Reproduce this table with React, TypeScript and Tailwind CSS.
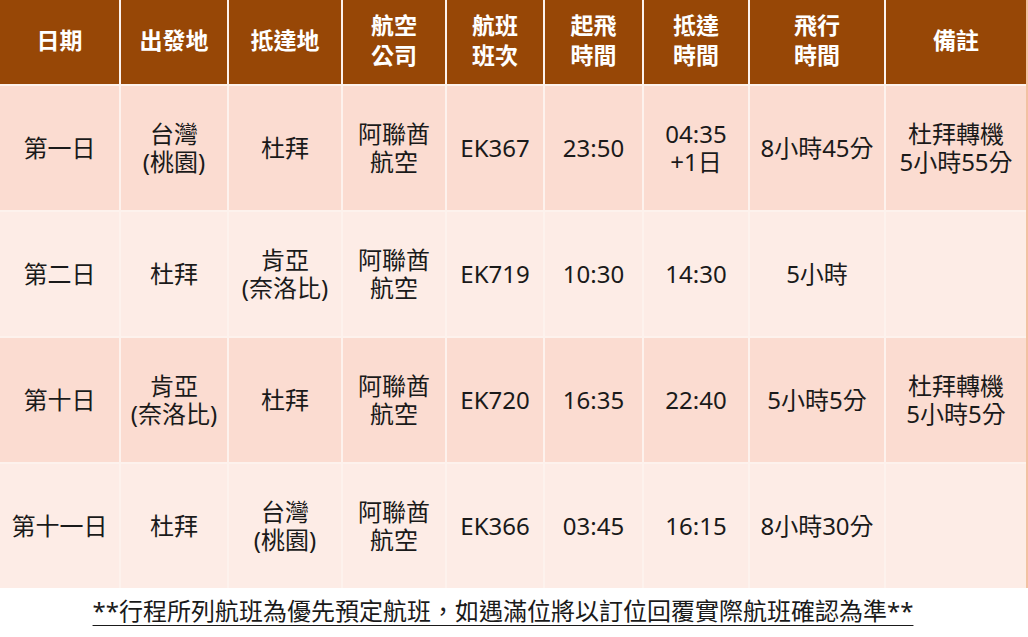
import React from "react";

const headers: string[][] = [
  ["日期"],
  ["出發地"],
  ["抵達地"],
  ["航空", "公司"],
  ["航班", "班次"],
  ["起飛", "時間"],
  ["抵達", "時間"],
  ["飛行", "時間"],
  ["備註"],
];

const rows: string[][][] = [
  [["第一日"], ["台灣", "(桃園)"], ["杜拜"], ["阿聯酋", "航空"], ["EK367"], ["23:50"], ["04:35", "+1日"], ["8小時45分"], ["杜拜轉機", "5小時55分"]],
  [["第二日"], ["杜拜"], ["肯亞", "(奈洛比)"], ["阿聯酋", "航空"], ["EK719"], ["10:30"], ["14:30"], ["5小時"], []],
  [["第十日"], ["肯亞", "(奈洛比)"], ["杜拜"], ["阿聯酋", "航空"], ["EK720"], ["16:35"], ["22:40"], ["5小時5分"], ["杜拜轉機", "5小時5分"]],
  [["第十一日"], ["杜拜"], ["台灣", "(桃園)"], ["阿聯酋", "航空"], ["EK366"], ["03:45"], ["16:15"], ["8小時30分"], []],
];

const font = { fontFamily: '"Noto Sans", "Noto Sans CJK TC", sans-serif' };
const tcFont = { fontFamily: '"Noto Sans CJK TC", sans-serif' };

export default function App() {
  return (
    <div lang="zh-Hant-TW" className="w-[1028px] h-[637px] bg-white overflow-hidden" style={font}>
      <div className="w-[1028px] pr-[2px] bg-[#f2c1a2]">
        <div className="grid grid-cols-[119px_106px_112px_102px_96px_97px_104px_134px_140px] gap-[2px] bg-[#fdf2ed]">
          {headers.map((h, i) => (
            <div
              key={i}
              className="h-[84px] pb-[5px] bg-[#974706] text-white font-bold text-[23px] leading-[30px] flex flex-col items-center justify-center"
            >
              {h.map((t, j) => (
                <span key={j}>{t}</span>
              ))}
            </div>
          ))}
          {rows.map((r, ri) =>
            r.map((c, ci) => (
              <div
                key={`${ri}-${ci}`}
                className={`h-[124px] ${ri % 2 === 0 ? "bg-[#fbdcd1]" : "bg-[#fdece6]"} text-[#1a1a1a] text-[24px] leading-[28px] flex flex-col items-center justify-center`}
              >
                {c.map((t, j) => (
                  <span key={j}>{t}</span>
                ))}
              </div>
            ))
          )}
        </div>
      </div>
      <div className="bg-white pt-[7px] flex justify-center pr-[22px]">
        <span className="text-[24px] leading-[30px] text-[#1a1a1a] underline underline-offset-[5px] decoration-1">
          **行程所列航班為優先預定航班<span style={tcFont}>，</span>如遇滿位將以訂位回覆實際航班確認為準**
        </span>
      </div>
    </div>
  );
}
